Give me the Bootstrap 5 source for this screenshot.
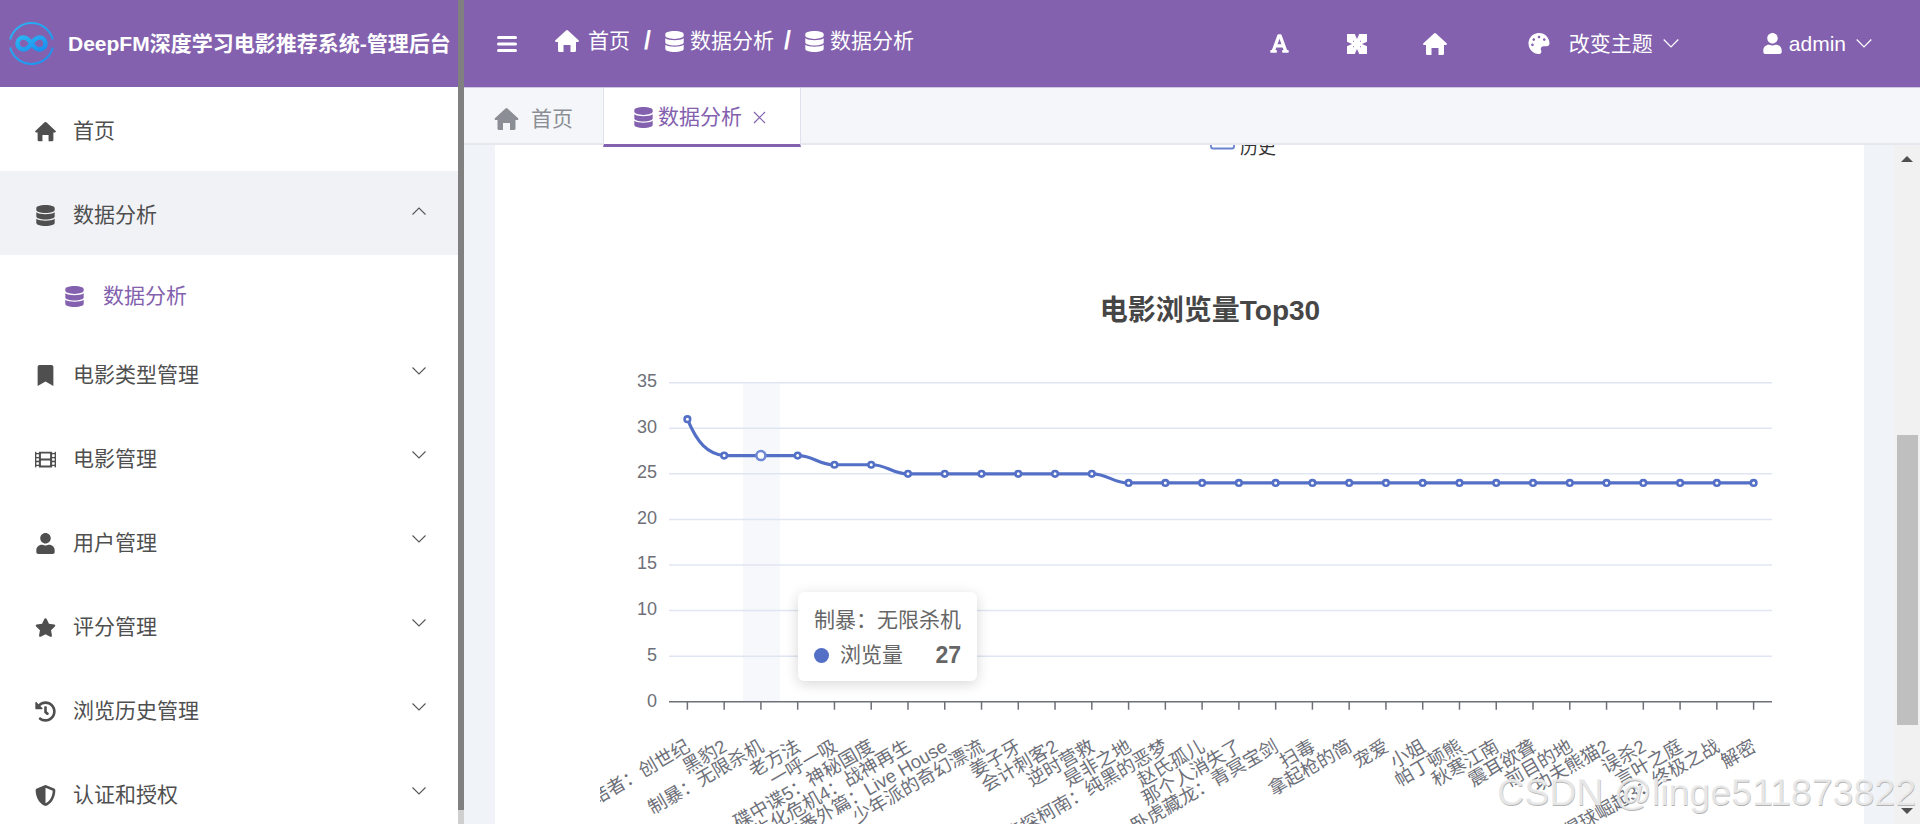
<!DOCTYPE html>
<html lang="zh-CN">

<head>
  <meta charset="UTF-8">
  <meta name="viewport" content="width=device-width, initial-scale=1.0">
  <title>DeepFM深度学习电影推荐系统-管理后台</title>
  <link rel="stylesheet" href="https://cdn.jsdelivr.net/npm/bootstrap@5.3.3/dist/css/bootstrap.min.css">
  <style>
    html,
    body {
      height: 824px;
      overflow: hidden;
    }

    body {
      font-family: "Liberation Sans", "Noto Sans CJK SC", sans-serif;
      font-size: 21px;
      color: #4f4f4f;
    }

    .ic {
      width: 21px;
      height: 21px;
      fill: currentColor;
      flex: none;
    }

    .chev {
      width: 14px;
      height: 8px;
      fill: none;
      stroke: currentColor;
      stroke-width: 1.1;
      flex: none;
    }

    /* sidebar */
    .side {
      width: 458px;
      flex: none;
    }

    .side-track {
      width: 6px;
      flex: none;
      background: #cfcfcf;
    }

    .side-thumb {
      height: 810px;
      background: #808080;
    }

    .brand {
      height: 87px;
      background: #8361ae;
      padding-left: 8px;
      color: #fff;
      font-weight: 700;
      white-space: nowrap;
    }

    .brand svg {
      width: 47px;
      height: 47px;
      margin-right: 13px;
      flex: none;
    }

    .menu .nav-link {
      height: 84px;
      padding: 4px 32px 0 35px;
      color: #4f4f4f;
      gap: 17px;
    }

    .menu .nav-link.open {
      background: #f1f2f6;
    }

    .menu .nav-link.sub {
      height: 76px;
      padding: 6px 32px 0 64px;
      color: #8361ae;
      gap: 18px;
    }

    .menu .chev {
      margin-left: auto;
      margin-top: -9px;
      color: #555;
    }

    /* top bar */
    .topbar {
      height: 87px;
      background: #8361ae;
      color: #fff;
      padding: 0 48px 0 33px;
    }

    .ham {
      width: 20px;
      height: 16px;
      margin-right: 38px;
      stroke: #fff;
      stroke-width: 3;
      stroke-linecap: round;
      flex: none;
    }

    .topbar .breadcrumb {
      margin: 0 0 5px;
    }

    .topbar .breadcrumb-item,
    .topbar .breadcrumb-item.active {
      color: #fff;
      display: flex;
      align-items: center;
    }

    .topbar .breadcrumb-item+.breadcrumb-item {
      padding-left: 14px;
    }

    .topbar .breadcrumb-item:last-child {
      padding-left: 10px;
    }

    .topbar .breadcrumb-item+.breadcrumb-item::before {
      color: #fff;
      font-weight: 700;
      font-size: 25px;
      float: none;
      padding-right: 13px;
    }

    .crumb-home {
      width: 24px;
      height: 22px;
      margin-right: 9px;
    }

    .crumb-db {
      margin-right: 5px;
    }

    .tool {
      height: 21px;
      width: 21px;
    }

    .tool-font {
      margin-right: 57px;
    }

    .tool-full {
      width: 20px;
      height: 20px;
      margin-right: 56px;
    }

    .tool-home {
      width: 24px;
      height: 22px;
      margin-right: 80px;
    }

    .tool-theme {
      width: 24px;
      margin-right: 18px;
    }

    .theme-chev {
      width: 16px;
      height: 9px;
      margin: 0 83px 0 10px;
    }

    .user-chev {
      width: 16px;
      height: 9px;
      margin-left: 10px;
    }

    .admin-ic {
      margin-right: 6px;
    }

    /* tabs */
    .tabbar {
      height: 58px;
      background: #f4f6fa;
      border-top: 1px solid #cfc8e2;
      border-bottom: 2px solid #e6e7ef;
    }

    .tabbar .tab {
      color: #8b8e94;
      height: 59px;
      width: 139px;
      padding: 2px 0 0 30px;
      gap: 12px;
    }

    .tabbar .tab.active {
      position: relative;
      z-index: 1;
      width: 198px;
      padding: 2px 0 0 29px;
      gap: 4px;
      color: #8361ae;
      background: #fff;
      border-left: 1px solid #e2e0ec;
      border-right: 1px solid #e2e0ec;
      border-bottom: 3px solid #8361ae;
    }

    .tab-home {
      width: 25px;
      height: 22px;
    }

    .tab-x {
      width: 13px;
      height: 13px;
      margin-left: 7px;
      stroke: currentColor;
      stroke-width: 1.2;
    }

    /* content */
    .gutter-l {
      width: 31px;
      flex: none;
      background: #f0f3f7;
    }

    .gutter-r {
      width: 30px;
      flex: none;
      background: #f0f3f7;
    }

    .chart-card {
      width: 1369px;
      flex: none;
    }

    .chart-card svg {
      display: block;
    }

    .chart-card text {
      font-family: "Liberation Sans", "Noto Sans CJK SC", sans-serif;
    }

    .page-scroll {
      width: 26px;
      flex: none;
      background: #f1f1f1;
    }

    .page-scroll .up,
    .page-scroll .down {
      width: 0;
      height: 0;
      border-left: 6px solid transparent;
      border-right: 6px solid transparent;
    }

    .page-scroll .up {
      border-bottom: 6px solid #505050;
      margin-top: 11px;
      margin-bottom: 273px;
    }

    .page-scroll .down {
      border-top: 6px solid #505050;
      margin-top: 83px;
    }

    .page-scroll .thumb {
      width: 21px;
      height: 290px;
      background: #bfbfbf;
    }

    .chart-tip {
      left: 303px;
      top: 447px;
      width: 179px;
      height: 89px;
      padding: 16px 16px;
      color: #666;
      box-shadow: 0 3px 14px rgba(0, 0, 0, .16);
      line-height: 24px;
    }

    .chart-tip b {
      font-size: 23px;
    }

    .tip-row {
      margin-top: 11px;
    }

    .tip-dot {
      width: 15px;
      height: 15px;
      background: #5470c6;
      margin-right: 11px;
    }

    .watermark {
      right: 4px;
      bottom: 13px;
      font-size: 37.5px;
      line-height: 1;
      white-space: nowrap;
      color: rgba(240, 240, 240, .85);
      text-shadow: .5px .5px .5px #b4b4b4;
      pointer-events: none;
    }
  </style>
</head>

<body>
  <svg width="0" height="0" class="position-absolute">
    <defs>
      <symbol id="i-home" viewBox="0 0 24 22"><path d="M11 .5a1.500 1.500 0 0 1 2 0L23.600 10.300c.6.6.2 1.700-.7 1.700H21v8.800c0 .7-.5 1.200-1.200 1.200H15.500V15h-7v7H4.200C3.500 22 3 21.500 3 20.800V12H1.100c-.9 0-1.300-1.100-.7-1.700z"/></symbol>
      <symbol id="i-db" viewBox="0 0 448 512"><path d="M448 73.143v45.714C448 159.143 347.667 192 224 192S0 159.143 0 118.857V73.143C0 32.857 100.333 0 224 0s224 32.857 224 73.143zM448 176v102.857C448 319.143 347.667 352 224 352S0 319.143 0 278.857V176c48.125 33.143 136.208 48.572 224 48.572S399.874 209.143 448 176zm0 160v102.857C448 479.143 347.667 512 224 512S0 479.143 0 438.857V336c48.125 33.143 136.208 48.572 224 48.572S399.874 369.143 448 336z"/></symbol>
      <symbol id="i-bookmark" viewBox="0 0 384 512"><path d="M0 512V48C0 21.49 21.49 0 48 0h288c26.51 0 48 21.49 48 48v464L192 400 0 512z"/></symbol>
      <symbol id="i-film" viewBox="0 0 512 512"><path d="M488 64h-8v20c0 6.6-5.4 12-12 12h-40c-6.6 0-12-5.4-12-12V64H96v20c0 6.6-5.4 12-12 12H44c-6.6 0-12-5.4-12-12V64h-8C10.7 64 0 74.7 0 88v336c0 13.3 10.7 24 24 24h8v-20c0-6.6 5.4-12 12-12h40c6.6 0 12 5.4 12 12v20h320v-20c0-6.6 5.4-12 12-12h40c6.6 0 12 5.4 12 12v20h8c13.3 0 24-10.7 24-24V88c0-13.3-10.7-24-24-24zM96 372c0 6.6-5.4 12-12 12H44c-6.6 0-12-5.4-12-12v-40c0-6.6 5.4-12 12-12h40c6.6 0 12 5.4 12 12v40zm0-96c0 6.6-5.4 12-12 12H44c-6.6 0-12-5.4-12-12v-40c0-6.6 5.4-12 12-12h40c6.6 0 12 5.4 12 12v40zm0-96c0 6.6-5.4 12-12 12H44c-6.6 0-12-5.4-12-12v-40c0-6.6 5.4-12 12-12h40c6.6 0 12 5.4 12 12v40zm272 208c0 6.6-5.4 12-12 12H156c-6.6 0-12-5.4-12-12v-96c0-6.6 5.4-12 12-12h200c6.6 0 12 5.4 12 12v96zm0-168c0 6.6-5.4 12-12 12H156c-6.6 0-12-5.4-12-12v-96c0-6.6 5.4-12 12-12h200c6.6 0 12 5.4 12 12v96zm112 152c0 6.6-5.4 12-12 12h-40c-6.6 0-12-5.4-12-12v-40c0-6.6 5.4-12 12-12h40c6.6 0 12 5.4 12 12v40zm0-96c0 6.6-5.4 12-12 12h-40c-6.6 0-12-5.4-12-12v-40c0-6.6 5.4-12 12-12h40c6.6 0 12 5.4 12 12v40zm0-96c0 6.6-5.4 12-12 12h-40c-6.6 0-12-5.4-12-12v-40c0-6.6 5.4-12 12-12h40c6.6 0 12 5.4 12 12v40z"/></symbol>
      <symbol id="i-user" viewBox="0 0 448 512"><path d="M224 256c70.7 0 128-57.3 128-128S294.7 0 224 0 96 57.3 96 128s57.3 128 128 128zm89.6 32h-16.7c-22.2 10.2-46.9 16-72.9 16s-50.6-5.8-72.9-16h-16.7C60.2 288 0 348.2 0 422.4V464c0 26.5 21.5 48 48 48h352c26.5 0 48-21.5 48-48v-41.6c0-74.2-60.2-134.4-134.4-134.4z"/></symbol>
      <symbol id="i-star" viewBox="0 0 576 512"><path d="M259.3 17.8L194 150.2 47.9 171.5c-26.2 3.8-36.7 36.1-17.7 54.6l105.7 103-25 145.5c-4.5 26.3 23.2 46 46.4 33.7L288 439.6l130.7 68.7c23.2 12.2 50.9-7.4 46.4-33.7l-25-145.5 105.7-103c19-18.5 8.5-50.8-17.7-54.6L382 150.2 316.7 17.8c-11.7-23.6-45.6-23.9-57.4 0z"/></symbol>
      <symbol id="i-history" viewBox="0 0 512 512"><path d="M504 255.531c.253 136.64-111.18 248.372-247.82 248.468-59.015.042-113.223-20.53-155.822-54.911-11.077-8.94-11.905-25.541-1.839-35.607l11.267-11.267c8.609-8.609 22.353-9.551 31.891-1.984C173.062 425.135 212.781 440 256 440c101.705 0 184-82.311 184-184 0-101.705-82.311-184-184-184-48.814 0-93.149 18.969-126.068 49.932l50.754 50.754c10.08 10.08 2.941 27.314-11.313 27.314H24c-8.837 0-16-7.163-16-16V38.627c0-14.254 17.234-21.393 27.314-11.314l49.372 49.372C129.209 34.136 189.552 8 256 8c136.81 0 247.747 110.78 248 247.531zm-180.912 78.784l9.823-12.63c8.138-10.463 6.253-25.542-4.21-33.679L288 256.349V152c0-13.255-10.745-24-24-24h-16c-13.255 0-24 10.745-24 24v135.651l65.409 50.874c10.463 8.137 25.541 6.253 33.679-4.21z"/></symbol>
      <symbol id="i-shield" viewBox="0 0 512 512"><path d="M466.5 83.7l-192-80a48.15 48.15 0 0 0-36.9 0l-192 80C27.7 91.1 16 108.6 16 128c0 198.5 114.5 335.7 221.5 380.3 11.8 4.9 25.1 4.9 36.9 0C360.1 472.6 496 349.3 496 128c0-19.4-11.7-36.9-29.5-44.3zM256.1 446.3l-.1-381 175.9 73.3c-3.3 151.4-82.1 261.1-175.8 307.7z"/></symbol>
      <symbol id="i-palette" viewBox="0 0 512 512"><path d="M204.3 5C104.9 24.4 24.8 104.3 5.2 203.4c-37 187 131.7 326.4 258.8 306.7 41.2-6.4 61.4-54.6 42.5-91.7-23.1-45.4 9.9-98.4 60.9-98.4h79.7c35.8 0 64.8-29.6 64.9-65.3C511.5 97.1 368.1-26.9 204.3 5zM96 320c-17.7 0-32-14.3-32-32s14.3-32 32-32 32 14.3 32 32-14.3 32-32 32zm32-128c-17.7 0-32-14.3-32-32s14.3-32 32-32 32 14.3 32 32-14.3 32-32 32zm128-64c-17.7 0-32-14.3-32-32s14.3-32 32-32 32 14.3 32 32-14.3 32-32 32zm128 64c-17.7 0-32-14.3-32-32s14.3-32 32-32 32 14.3 32 32-14.3 32-32 32z"/></symbol>
      <symbol id="i-font" viewBox="0 0 448 512"><path d="M432 416h-23.41L277.88 53.69A32 32 0 0 0 247.58 32h-47.16a32 32 0 0 0-30.3 21.69L39.41 416H16a16 16 0 0 0-16 16v32a16 16 0 0 0 16 16h128a16 16 0 0 0 16-16v-32a16 16 0 0 0-16-16h-19.58l23.3-64h152.56l23.3 64H304a16 16 0 0 0-16 16v32a16 16 0 0 0 16 16h128a16 16 0 0 0 16-16v-32a16 16 0 0 0-16-16zM176.85 272L224 142.51 271.15 272z"/></symbol>
      <symbol id="i-full" viewBox="0 0 20 20"><path fill-rule="evenodd" d="M0 0H20V20H0ZM7.800 0L10 5L12.200 0ZM7.800 20L10 15L12.200 20ZM0 7.800L5 10L0 12.200ZM20 7.800L15 10L20 12.200ZM6 6.800H6.900V7.700H6ZM13.100 6.800H14V7.700H13.100ZM6 12.300H6.900V13.200H6ZM13.100 12.300H14V13.200H13.100Z"/></symbol>
      <symbol id="i-down" viewBox="0 0 14 8"><polyline points="0.5,0.5 7,7 13.5,0.5"/></symbol>
      <symbol id="i-up" viewBox="0 0 14 8"><polyline points="0.5,7.5 7,1 13.5,7.5"/></symbol>
    </defs>
  </svg>

  <div class="d-flex" style="height:824px">
    <!-- Sidebar -->
    <aside class="side d-flex flex-column bg-white overflow-hidden">
      <div class="brand d-flex align-items-center flex-shrink-0">
        <svg viewBox="0 0 47 47" fill="none">
          <defs>
            <linearGradient id="logoGrad" x1="0" y1="0" x2="1" y2="1">
              <stop offset="0" stop-color="#2bb4f2" />
              <stop offset="1" stop-color="#1a8ff0" />
            </linearGradient>
          </defs>
          <path d="M2.200 19.500A22 22 0 0 1 44.800 19.500M44.800 27.500A22 22 0 0 1 2.200 27.500" stroke="url(#logoGrad)" stroke-width="2" />
          <path d="M23.500 23.500c-3-4.500-5.500-6-8-6a6 6 0 0 0 0 12c2.500 0 5-1.500 8-6s5.500-6 8-6a6 6 0 0 1 0 12c-2.500 0-5-1.500-8-6z" stroke="url(#logoGrad)" stroke-width="4.500" />
        </svg>
        <span>DeepFM深度学习电影推荐系统-管理后台</span>
      </div>
      <nav class="menu nav flex-column flex-nowrap flex-shrink-0">
        <a class="nav-link d-flex align-items-center" href="#"><svg class="ic"><use href="#i-home" /></svg>首页</a>
        <a class="nav-link open d-flex align-items-center" href="#"><svg class="ic"><use href="#i-db" /></svg>数据分析<svg class="chev"><use href="#i-up" /></svg></a>
        <a class="nav-link sub d-flex align-items-center" href="#"><svg class="ic"><use href="#i-db" /></svg>数据分析</a>
        <a class="nav-link d-flex align-items-center" href="#"><svg class="ic"><use href="#i-bookmark" /></svg>电影类型管理<svg class="chev"><use href="#i-down" /></svg></a>
        <a class="nav-link d-flex align-items-center" href="#"><svg class="ic"><use href="#i-film" /></svg>电影管理<svg class="chev"><use href="#i-down" /></svg></a>
        <a class="nav-link d-flex align-items-center" href="#"><svg class="ic"><use href="#i-user" /></svg>用户管理<svg class="chev"><use href="#i-down" /></svg></a>
        <a class="nav-link d-flex align-items-center" href="#"><svg class="ic"><use href="#i-star" /></svg>评分管理<svg class="chev"><use href="#i-down" /></svg></a>
        <a class="nav-link d-flex align-items-center" href="#"><svg class="ic"><use href="#i-history" /></svg>浏览历史管理<svg class="chev"><use href="#i-down" /></svg></a>
        <a class="nav-link d-flex align-items-center" href="#"><svg class="ic"><use href="#i-shield" /></svg>认证和授权<svg class="chev"><use href="#i-down" /></svg></a>
      </nav>
    </aside>
    <div class="side-track">
      <div class="side-thumb"></div>
    </div>

    <!-- Main -->
    <main class="flex-grow-1 d-flex flex-column overflow-hidden">
      <header class="topbar d-flex align-items-center flex-shrink-0">
        <svg class="ham" viewBox="0 0 20 16">
          <path d="M1.500 1.500H18.500M1.500 8H18.500M1.500 14.500H18.500" />
        </svg>
        <ol class="breadcrumb">
          <li class="breadcrumb-item"><svg class="ic crumb-home"><use href="#i-home" /></svg>首页</li>
          <li class="breadcrumb-item"><svg class="ic crumb-db"><use href="#i-db" /></svg>数据分析</li>
          <li class="breadcrumb-item active"><svg class="ic crumb-db"><use href="#i-db" /></svg>数据分析</li>
        </ol>
        <div class="ms-auto d-flex align-items-center">
          <svg class="ic tool tool-font"><use href="#i-font" /></svg>
          <svg class="ic tool tool-full"><use href="#i-full" /></svg>
          <svg class="ic tool tool-home"><use href="#i-home" /></svg>
          <svg class="ic tool tool-theme"><use href="#i-palette" /></svg>
          <span>改变主题</span>
          <svg class="chev theme-chev"><use href="#i-down" /></svg>
          <svg class="ic admin-ic"><use href="#i-user" /></svg>
          <span>admin</span>
          <svg class="chev user-chev"><use href="#i-down" /></svg>
        </div>
      </header>

      <div class="tabbar d-flex flex-shrink-0">
        <div class="tab d-flex align-items-center"><svg class="ic tab-home"><use href="#i-home" /></svg>首页</div>
        <div class="tab active d-flex align-items-center"><svg class="ic"><use href="#i-db" /></svg>数据分析<svg class="tab-x" viewBox="0 0 13 13"><path d="M1 1L12 12M12 1L1 12" /></svg></div>
      </div>

      <div class="d-flex flex-grow-1 overflow-hidden">
        <div class="gutter-l"></div>
        <section class="chart-card bg-white position-relative overflow-hidden">
          <svg id="chart" width="1369" height="679" viewBox="495 145 1369 679"></svg>
          <div class="chart-tip position-absolute bg-white rounded-2">
            <div>制暴：无限杀机</div>
            <div class="tip-row d-flex align-items-center">
              <span class="tip-dot rounded-circle"></span>
              <span>浏览量</span>
              <b class="ms-auto">27</b>
            </div>
          </div>
        </section>
        <div class="gutter-r"></div>
        <div class="page-scroll d-flex flex-column align-items-center">
          <div class="up"></div>
          <div class="thumb"></div>
          <div class="down"></div>
        </div>
      </div>
    </main>
  </div>

  <div class="watermark position-absolute">CSDN @linge511873822</div>

  <script>
    // Chart data: top 30 movies by views
    const movies = ['终结者：创世纪', '黑豹2', '制暴：无限杀机', '老方法', '一呼一吸', '碟中谍5：神秘国度', '生化危机4：战神再生',
      '少年番外篇：Live House', '少年派的奇幻漂流', '姜子牙', '会计刺客2', '逆时营救', '是非之地', '名侦探柯南：纯黑的恶梦',
      '赵氏孤儿', '那个人消失了', '卧虎藏龙：青冥宝剑', '扫毒', '拿起枪的简', '宠爱', '小姐', '帕丁顿熊', '秋寒江南', '震耳欲聋',
      '前目的地', '功夫熊猫2', '误杀2', '言叶之庭', '猩球崛起3：终极之战', '解密'];
    const views = [31, 27, 27, 27, 26, 26, 25, 25, 25, 25, 25, 25, 24, 24, 24, 24, 24, 24, 24, 24, 24, 24, 24, 24, 24, 24, 24, 24, 24, 24];

    const gridLeft = 669, gridRight = 1772, gridBottom = 701.7, unit = 9.114;
    const step = (gridRight - gridLeft) / movies.length;
    const px = i => gridLeft + step * (i + 0.5);
    const py = v => gridBottom - v * unit;

    let svg = '';
    svg += '<rect x="743" y="382.7" width="37" height="319" fill="#f6f8fc"/>';

    // Legend, cut off by the scrolled tab bar
    svg += '<rect x="1211" y="132" width="23" height="16.500" rx="2" fill="#fff" stroke="#6a83cf" stroke-width="1.800"/>';
    svg += '<text x="1240" y="154" font-size="18" fill="#333">历史</text>';

    svg += '<text x="1210" y="320" font-size="28" font-weight="700" fill="#464646" text-anchor="middle">电影浏览量Top30</text>';

    // Y axis
    for (let v = 0; v <= 35; v += 5) {
      if (v > 0) svg += `<line x1="${gridLeft}" x2="${gridRight}" y1="${py(v)}" y2="${py(v)}" stroke="#e0e6f1" stroke-width="1.5"/>`;
      svg += `<text x="657" y="${py(v) + (v ? 4.5 : 5.5)}" font-size="18" fill="#6e7079" text-anchor="end">${v}</text>`;
    }

    // X axis
    svg += `<line x1="${gridLeft}" x2="${gridRight}" y1="${gridBottom}" y2="${gridBottom}" stroke="#6e7079" stroke-width="1.5"/>`;
    svg += '<g clip-path="url(#labelClip)">';
    movies.forEach((name, i) => {
      svg += `<line x1="${px(i)}" x2="${px(i)}" y1="${gridBottom}" y2="${gridBottom + 8}" stroke="#6e7079" stroke-width="1.5"/>`;
      svg += `<text transform="translate(${px(i) + 4} 750) rotate(-30)" font-size="18.500" fill="#6e7079" text-anchor="end">${name}</text>`;
    });
    svg += '</g><clipPath id="labelClip"><rect x="600" y="600" width="1264" height="224"/></clipPath>';

    // Smooth line
    let d = `M${px(0)} ${py(views[0])}`;
    for (let i = 1; i < views.length; i++) {
      const x0 = px(i - 1), x1 = px(i), y0 = py(views[i - 1]), y1 = py(views[i]);
      if (i === 1) d += `C${x0 + 10} ${y0 + 24} ${x0 + 20} ${y1 - 2} ${x1} ${y1}`;
      else d += `C${x0 + step * 0.45} ${y0} ${x1 - step * 0.45} ${y1} ${x1} ${y1}`;
    }
    svg += `<path d="${d}" fill="none" stroke="#5470c6" stroke-width="3.2"/>`;

    views.forEach((v, i) => {
      const hover = i === 2;
      svg += `<circle cx="${px(i)}" cy="${py(v)}" r="${hover ? 4.5 : 2.8}" fill="#fff" stroke="${hover ? '#6f88d3' : '#5470c6'}" stroke-width="${hover ? 2.5 : 2.6}"/>`;
    });

    document.getElementById('chart').innerHTML = svg;
  </script>

  <script src="https://cdn.jsdelivr.net/npm/bootstrap@5.3.3/dist/js/bootstrap.bundle.min.js"></script>
</body>

</html>
